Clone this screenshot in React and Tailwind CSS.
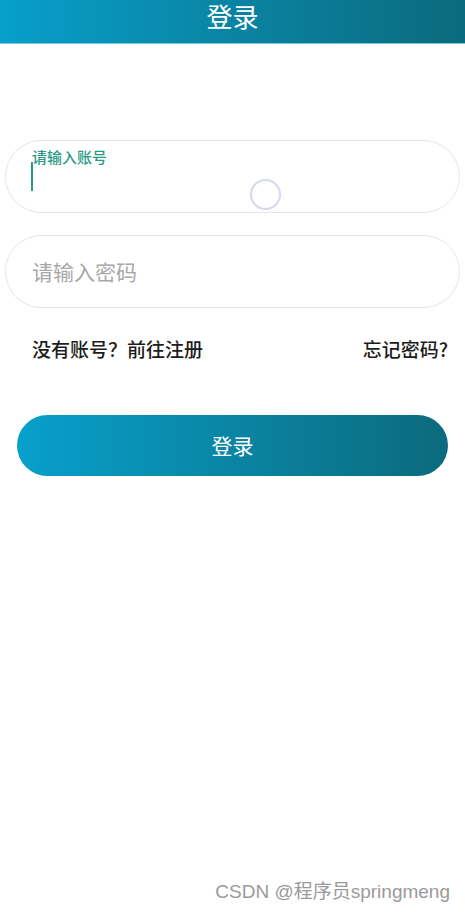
import React from 'react';

const font = { fontFamily: '"Noto Sans CJK SC", "Noto Sans", sans-serif' };

const App = () => {
  return (
    <div className="min-h-[912px] bg-white relative" style={font}>
      {/* Header */}
      <div className="h-[44px] bg-gradient-to-r from-[#079fcb] to-[#0b6a7d] border-b border-[#7cc7dc] flex justify-center">
        <h1 className="text-[26px] leading-[31px] text-white">登录</h1>
      </div>

      {/* Form */}
      <div className="px-[5px] pt-[96px] flex flex-col gap-[22px]">
        {/* Account input (focused) */}
        <div className="relative h-[73px] rounded-full border border-[#e6e6ea]">
          <span className="absolute left-[26px] top-[6px] text-[15px] leading-[20px] font-medium text-[#2b9a86]">请输入账号</span>
          <span className="absolute left-[25px] top-[21px] w-[2px] h-[29px] bg-[#2b9a86]"></span>
          <span className="absolute left-[244px] top-[38px] w-[31px] h-[31px] rounded-full border-2 border-[#d3d9ee]"></span>
        </div>

        {/* Password input */}
        <div className="h-[73px] rounded-full border border-[#e6e6ea] pl-[26px] flex items-center">
          <span className="text-[21px] text-[#a8a8a8]">请输入密码</span>
        </div>
      </div>

      {/* Links */}
      <div className="flex justify-between pl-[32px] pr-[17px] mt-[28px] text-[19px] leading-[26px] font-medium text-[#1c1c1c]">
        <span>没有账号？前往注册</span>
        <span>忘记密码?</span>
      </div>

      {/* Login button */}
      <div className="px-[17px] mt-[53px]">
        <button className="w-full h-[61px] rounded-full bg-gradient-to-r from-[#07a0cc] to-[#0b6a7d] text-white text-[21px]">
          登录
        </button>
      </div>

      {/* Watermark */}
      <div
        className="absolute right-[15px] top-[879px] text-[19px] leading-[26px] text-[#9a9a9a]"
        style={{ fontFamily: '"Liberation Sans", "Noto Sans CJK SC", sans-serif' }}
      >
        CSDN @程序员springmeng
      </div>
    </div>
  );
};

export default App;
